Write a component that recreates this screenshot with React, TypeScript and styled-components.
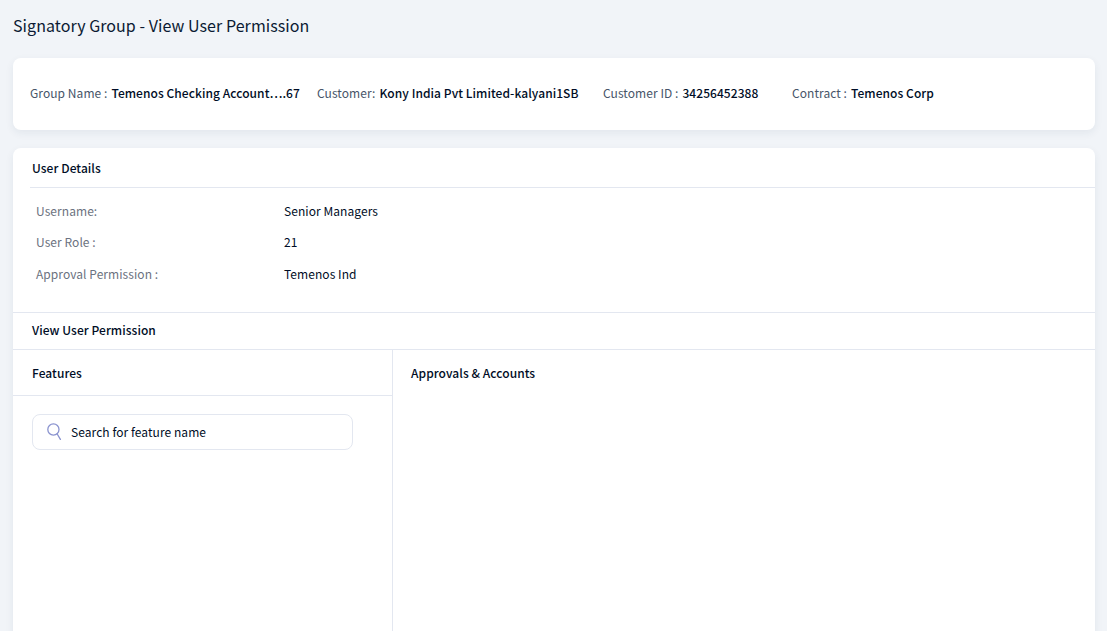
import React from "react";
import styled, { createGlobalStyle } from "styled-components";

const GlobalStyle = createGlobalStyle`
  html, body {
    margin: 0;
    height: 100%;
    overflow: hidden;
    background: #f1f4f8;
  }
  * {
    box-sizing: border-box;
  }
`;

const Page = styled.div`
  height: 631px;
  overflow: hidden;
  padding: 0 12px 0 13px;
  font-family: "Noto Sans CJK SC", "Noto Sans", sans-serif;
  font-size: 12px;
  letter-spacing: 0.06px;
  color: #000d26;
`;

const Title = styled.h1`
  margin: 0;
  height: 58px;
  padding-bottom: 8px;
  display: flex;
  align-items: center;
  font-size: 16px;
  font-weight: 400;
  color: #0b1a33;
`;

const Card = styled.section`
  background: #fff;
  border-radius: 8px;
  box-shadow: 0 3px 8px rgba(30, 50, 90, 0.07);
`;

const SummaryCard = styled(Card)`
  height: 72px;
  margin-bottom: 18px;
  padding: 0 0 4px 17px;
  display: flex;
  align-items: center;
`;

const SummaryItem = styled.div<{ $width: number }>`
  width: ${(p) => p.$width}px;
  display: flex;
  white-space: nowrap;
`;

const SummaryLabel = styled.span`
  color: #475569;
  margin-right: 4px;
`;

const SummaryValue = styled.span`
  color: #000d26;
  font-weight: 500;
`;

const SectionHead = styled.div`
  height: 40px;
  margin-left: 17px;
  padding-left: 2px;
  display: flex;
  align-items: center;
  font-weight: 500;
  border-bottom: 1px solid #e3e7f0;
`;

const DetailList = styled.div`
  height: 124px;
  padding: 7px 0 0 23px;
`;

const DetailRow = styled.div`
  height: 31px;
  display: flex;
  align-items: center;

  &:last-child {
    margin-top: 1px;
  }
`;

const DetailLabel = styled.span`
  width: 248px;
  color: #6b7280;
`;

const PermissionHead = styled.div`
  height: 38px;
  padding: 0 0 3px 19px;
  display: flex;
  align-items: center;
  font-weight: 500;
  border-top: 1px solid #e3e7f0;
  border-bottom: 1px solid #e3e7f0;
`;

const Columns = styled.div`
  display: grid;
  grid-template-columns: 380px 1fr;
  height: 300px;
`;

const FeatureColumn = styled.div`
  border-right: 1px solid #e3e7f0;
`;

const ColumnHead = styled.div<{ $ruled?: boolean }>`
  height: 46px;
  padding-left: ${(p) => (p.$ruled ? 19 : 18)}px;
  padding-bottom: ${(p) => (p.$ruled ? 0 : 2)}px;
  display: flex;
  align-items: center;
  font-weight: 500;
  border-bottom: ${(p) => (p.$ruled ? "1px solid #e3e7f0" : "none")};
`;

const SearchBox = styled.div`
  width: 321px;
  height: 36px;
  margin: 18px 0 0 19px;
  padding: 0 0 2px 14px;
  display: flex;
  align-items: center;
  gap: 8px;
  border: 1px solid #e3e7f0;
  border-radius: 8px;
`;

const SearchIcon = () => (
  <svg width="16" height="18" viewBox="0 0 16 18" fill="none" stroke="#8a93cf" strokeWidth="1.3">
    <circle cx="6.4" cy="7.5" r="5.6" />
    <path d="M10.2 12l3.2 5.4" strokeLinecap="round" />
  </svg>
);

const summary = [
  { label: "Group Name :", value: "Temenos Checking Account….67", width: 287 },
  { label: "Customer:", value: "Kony India Pvt Limited-kalyani1SB", width: 286 },
  { label: "Customer ID :", value: "34256452388", width: 189 },
  { label: "Contract :", value: "Temenos Corp", width: 200 },
];

const details = [
  ["Username:", "Senior Managers"],
  ["User Role :", "21"],
  ["Approval Permission :", "Temenos Ind"],
];

export default function App() {
  return (
    <Page>
      <GlobalStyle />
      <Title>Signatory Group - View User Permission</Title>
      <SummaryCard>
        {summary.map((item) => (
          <SummaryItem key={item.label} $width={item.width}>
            <SummaryLabel>{item.label}</SummaryLabel>
            <SummaryValue>{item.value}</SummaryValue>
          </SummaryItem>
        ))}
      </SummaryCard>
      <Card>
        <SectionHead>User Details</SectionHead>
        <DetailList>
          {details.map(([label, value]) => (
            <DetailRow key={label}>
              <DetailLabel>{label}</DetailLabel>
              <span>{value}</span>
            </DetailRow>
          ))}
        </DetailList>
        <PermissionHead>View User Permission</PermissionHead>
        <Columns>
          <FeatureColumn>
            <ColumnHead $ruled>Features</ColumnHead>
            <SearchBox>
              <SearchIcon />
              <span>Search for feature name</span>
            </SearchBox>
          </FeatureColumn>
          <div>
            <ColumnHead>Approvals &amp; Accounts</ColumnHead>
          </div>
        </Columns>
      </Card>
    </Page>
  );
}
